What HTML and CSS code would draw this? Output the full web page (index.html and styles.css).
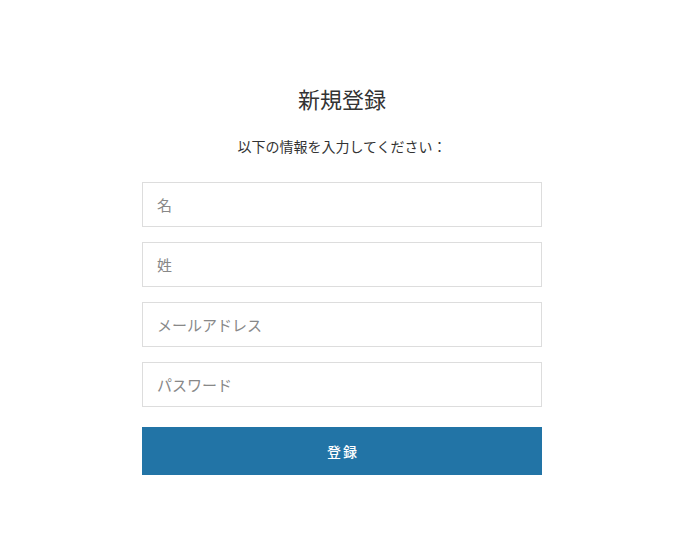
FILE: index.html
```html
<!DOCTYPE html>
<html lang="ja">
<head>
<meta charset="utf-8">
<title>新規登録</title>
<link rel="stylesheet" href="styles.css">
</head>
<body>
<main class="page">
  <form class="register">
    <h1 class="title">新規登録</h1>
    <p class="lead">以下の情報を入力してください：</p>
    <input class="field" type="text" placeholder="名">
    <input class="field" type="text" placeholder="姓">
    <input class="field" type="email" placeholder="メールアドレス">
    <input class="field" type="password" placeholder="パスワード">
    <button class="submit" type="button">登録</button>
  </form>
</main>
</body>
</html>
```
FILE: styles.css
```css
html, body {
  margin: 0;
  padding: 0;
  background: #ffffff;
}
body {
  font-family: "Noto Sans CJK JP", "Noto Sans", sans-serif;
  color: #333333;
}
.page {
  display: flex;
  justify-content: center;
  padding-left: 11px;
  padding-top: 83px;
}
.register {
  width: 400px;
  display: flex;
  flex-direction: column;
  gap: 15px;
}
.title {
  margin: 0;
  font-size: 22px;
  line-height: 30px;
  font-weight: 400;
  text-align: center;
  color: #333333;
}
.lead {
  margin: 8px 0 11px;
  font-size: 14px;
  line-height: 20px;
  text-align: center;
  color: #333333;
}
.field {
  box-sizing: border-box;
  width: 400px;
  height: 45px;
  margin: 0;
  padding: 0 14px;
  border: 1px solid #dddddd;
  border-radius: 0;
  font-family: inherit;
  font-size: 15px;
  color: #333333;
  background: #ffffff;
  outline: none;
}
.field::placeholder {
  color: #888888;
}
.submit {
  margin-top: 5px;
  height: 48px;
  width: 400px;
  border: 0;
  border-radius: 0;
  background: #2274a6;
  color: #ffffff;
  font-family: inherit;
  font-size: 14px;
  font-weight: 500;
  letter-spacing: 2px;
  padding: 0 0 0 2px;
}
```
